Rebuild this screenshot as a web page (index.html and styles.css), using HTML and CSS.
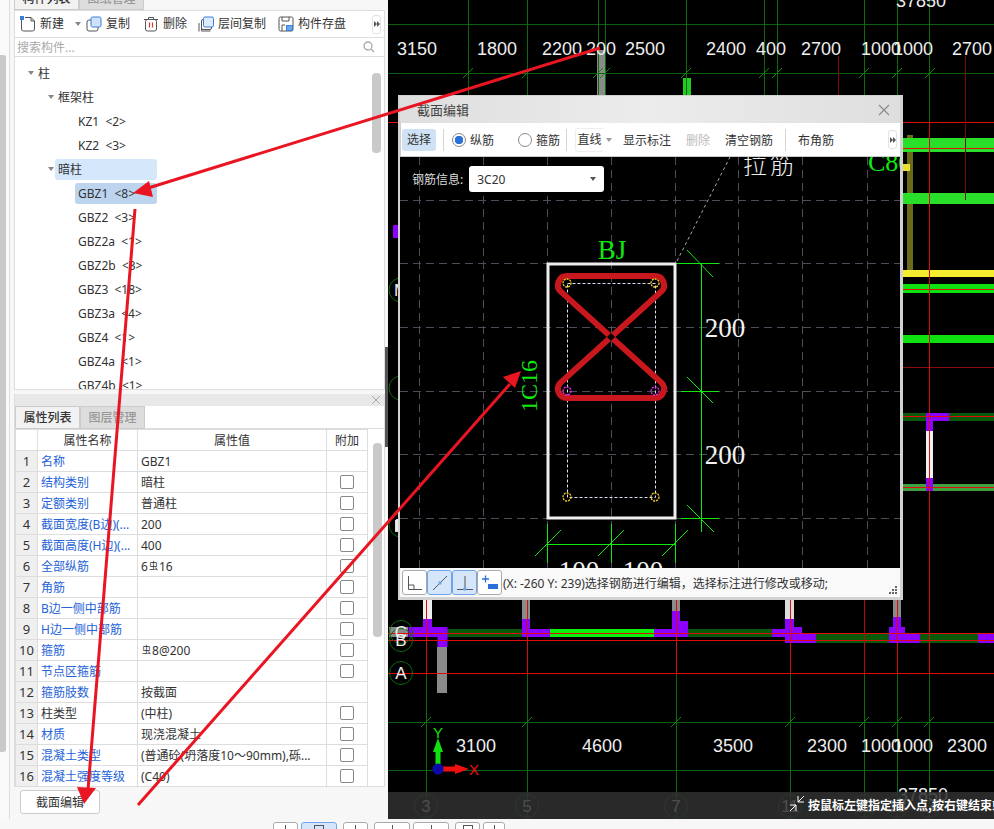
FILE: index.html
```html
<!DOCTYPE html>
<html lang="zh-CN">
<head>
    <meta charset="UTF-8">
    <title>截面编辑</title>
    <link rel="stylesheet" href="styles.css">
</head>
<body>
<div class="app">
    <div class="main">
        <div class="rail"><div class="rail-thumb"></div></div>

        <div class="left">
            <div class="panel-tabs cut">
                <div class="tab active">构件列表</div>
                <div class="tab">图纸管理</div>
            </div>
            <div class="toolbar">
                <div class="tb-item tb-new">
                    <svg width="16" height="16" viewBox="0 0 16 16"><path d="M1.500 3.500V13a2 2 0 0 0 2 2h9a2 2 0 0 0 2-2V5l-3.500-3.500H5" fill="none" stroke="#555"/><path d="M11 1.500V5h3.500" fill="none" stroke="#555"/><rect x="0" y="0" width="4" height="4" fill="#3a7fd8"/></svg>
                    <span>新建</span><i class="caret"></i>
                </div>
                <div class="tb-item tb-copy">
                    <svg width="16" height="16" viewBox="0 0 16 16"><rect x="1" y="4" width="11" height="11" rx="2" fill="#fff" stroke="#555"/><rect x="5" y="1" width="10" height="10" rx="1.500" fill="#cfe2fa" stroke="#3a7fd8"/></svg>
                    <span>复制</span>
                </div>
                <div class="tb-item tb-del">
                    <svg width="16" height="16" viewBox="0 0 16 16"><path d="M1 3.500h14M5.500 3.500V1.500h5v2" fill="none" stroke="#555"/><rect x="2.500" y="3.500" width="11" height="11.500" rx="2" fill="none" stroke="#555"/><path d="M6.500 6.500v5M9.500 6.500v5" stroke="#d33" stroke-width="1.200"/></svg>
                    <span>删除</span>
                </div>
                <div class="tb-item tb-floor">
                    <svg width="16" height="16" viewBox="0 0 16 16"><path d="M3.500 5v10h9M1 7v8.500" fill="none" stroke="#555"/><rect x="3.500" y="3.500" width="10" height="10" rx="1.500" fill="none" stroke="#555"/><rect x="5.500" y="1" width="10" height="10" rx="1.500" fill="#dfeafa" stroke="#3a7fd8"/></svg>
                    <span>层间复制</span>
                </div>
                <div class="tb-item tb-save">
                    <svg width="16" height="16" viewBox="0 0 16 16"><rect x="1" y="1" width="14" height="14" rx="1.500" fill="none" stroke="#555"/><path d="M4 1v4h7V1M4 15V9h3" fill="none" stroke="#555"/><rect x="8.500" y="9.500" width="6" height="5" fill="#6fa6e8" stroke="#3a7fd8"/></svg>
                    <span>构件存盘</span>
                </div>
                <div class="more-btn"><i></i><i></i></div>
            </div>
            <div class="search">
                <span>搜索构件...</span>
                <svg width="12" height="12" viewBox="0 0 12 12"><circle cx="5" cy="5" r="4" fill="none" stroke="#aaa" stroke-width="1.300"/><path d="M8 8l3 3" stroke="#aaa" stroke-width="1.300"/></svg>
            </div>
            <div class="tree">
                <div class="tree-scroll"></div>
                <div class="row lv0"><i class="caret"></i>柱</div>
                <div class="row lv1"><i class="caret"></i>框架柱</div>
                <div class="row lv2"><span>KZ1 &nbsp;&lt;2&gt;</span></div>
                <div class="row lv2"><span>KZ2 &nbsp;&lt;3&gt;</span></div>
                <div class="row lv1"><i class="caret"></i><span class="hl-group">暗柱</span></div>
                <div class="row lv2"><span class="hl-item">GBZ1 &nbsp;&lt;8&gt;</span></div>
                <div class="row lv2"><span>GBZ2 &nbsp;&lt;3&gt;</span></div>
                <div class="row lv2"><span>GBZ2a &nbsp;&lt;1&gt;</span></div>
                <div class="row lv2"><span>GBZ2b &nbsp;&lt;3&gt;</span></div>
                <div class="row lv2"><span>GBZ3 &nbsp;&lt;18&gt;</span></div>
                <div class="row lv2"><span>GBZ3a &nbsp;&lt;4&gt;</span></div>
                <div class="row lv2"><span>GBZ4 &nbsp;&lt;1&gt;</span></div>
                <div class="row lv2"><span>GBZ4a &nbsp;&lt;1&gt;</span></div>
                <div class="row lv2"><span>GBZ4b &nbsp;&lt;1&gt;</span></div>
            </div>

            <div class="props">
                <div class="props-bar"><svg width="10" height="10" viewBox="0 0 10 10"><path d="M1 1l8 8M9 1l-8 8" stroke="#aaa"/></svg></div>
                <div class="panel-tabs">
                    <div class="tab active">属性列表</div>
                    <div class="tab">图层管理</div>
                </div>
                <div class="props-body">
                    <table class="prop-table">
                        <tr class="head"><th class="c-no"></th><th class="c-name">属性名称</th><th class="c-val">属性值</th><th class="c-add">附加</th></tr>
                        <tr><td class="no">1</td><td class="name">名称</td><td>GBZ1</td><td></td></tr>
                        <tr><td class="no">2</td><td class="name">结构类别</td><td>暗柱</td><td><i class="check"></i></td></tr>
                        <tr><td class="no">3</td><td class="name">定额类别</td><td>普通柱</td><td><i class="check"></i></td></tr>
                        <tr><td class="no">4</td><td class="name">截面宽度(B边)(...</td><td>200</td><td><i class="check"></i></td></tr>
                        <tr><td class="no">5</td><td class="name">截面高度(H边)(...</td><td>400</td><td><i class="check"></i></td></tr>
                        <tr><td class="no">6</td><td class="name">全部纵筋</td><td>6<span class="bar-sign">虫</span>16</td><td><i class="check"></i></td></tr>
                        <tr><td class="no">7</td><td class="name">角筋</td><td></td><td><i class="check"></i></td></tr>
                        <tr><td class="no">8</td><td class="name">B边一侧中部筋</td><td></td><td><i class="check"></i></td></tr>
                        <tr><td class="no">9</td><td class="name">H边一侧中部筋</td><td></td><td><i class="check"></i></td></tr>
                        <tr><td class="no">10</td><td class="name">箍筋</td><td><span class="bar-sign">虫</span>8@200</td><td><i class="check"></i></td></tr>
                        <tr><td class="no">11</td><td class="name">节点区箍筋</td><td></td><td><i class="check"></i></td></tr>
                        <tr><td class="no">12</td><td class="name">箍筋肢数</td><td>按截面</td><td></td></tr>
                        <tr><td class="no">13</td><td>柱类型</td><td>(中柱)</td><td><i class="check"></i></td></tr>
                        <tr><td class="no">14</td><td class="name">材质</td><td>现浇混凝土</td><td><i class="check"></i></td></tr>
                        <tr><td class="no">15</td><td class="name">混凝土类型</td><td>(普通砼(坍落度10～90mm),砾...</td><td><i class="check"></i></td></tr>
                        <tr><td class="no">16</td><td class="name">混凝土强度等级</td><td>(C40)</td><td><i class="check"></i></td></tr>
                    </table>
                    <div class="props-scroll"></div>
                </div>
            </div>
            <div class="btn-row"><button class="btn">截面编辑</button></div>
        </div>

        <div class="splitter"><div class="splitter-grip"></div></div>

        <div class="cad">
            <svg class="cad-svg" width="606" height="819" viewBox="388 0 606 819">
                <rect x="388" y="0" width="606" height="819" fill="#000"/>

                <!-- bars on the right -->
                <rect x="907" y="135" width="6" height="135" fill="#6a6a18"/>
                <rect x="903" y="138" width="91" height="14" fill="#2adf2a"/>
                <rect x="903" y="164" width="7" height="7" fill="#e8e030"/>
                <rect x="903" y="193" width="91" height="11" fill="#2adf2a"/>
                <rect x="903" y="270" width="91" height="7" fill="#f5ee30"/>
                <rect x="903" y="284" width="91" height="9" fill="#0fe00f"/>
                <rect x="903" y="335" width="91" height="8" fill="#0fe00f"/>
                <rect x="903" y="413" width="91" height="8" fill="#0a5a0a"/>
                <rect x="903" y="484" width="91" height="7" fill="#3fa03f"/>
                <rect x="926" y="431" width="7" height="47" fill="#f2f2f2"/>
                <path d="M926 413h23v8h-16v10h-7zM926 478h7v13h-7z" fill="#8b00ff"/>

                <!-- columns top -->
                <rect x="597" y="50" width="9" height="45" fill="#8a8a8a"/>
                <rect x="683" y="78" width="8" height="17" fill="#22cc22"/>

                <!-- left strip bits -->
                <rect x="393" y="225" width="5" height="13" fill="#8b00ff"/>
                <rect x="395" y="520" width="3" height="12" fill="#ddd"/>

                <!-- beams bottom -->
                <g fill="#8a8a8a">
                    <rect x="437" y="647" width="10" height="46"/>
                    <rect x="522" y="600" width="8" height="19"/>
                    <rect x="672" y="600" width="8" height="11"/>
                    <rect x="893" y="600" width="8" height="17"/>
                </g>
                <rect x="423" y="600" width="9" height="19" fill="#eee"/>
                <rect x="785" y="600" width="9" height="19" fill="#ddd"/>
                <g fill="#0a5a0a">
                    <rect x="447" y="629" width="75" height="8"/>
                    <rect x="688" y="629" width="84" height="8"/>
                    <rect x="816" y="633" width="73" height="10"/>
                    <rect x="920" y="633" width="58" height="10"/>
                </g>
                <rect x="550" y="629" width="104" height="8" fill="#0cf00c"/>
                <g fill="#8b00ff">
                    <path d="M423 619h9v8h15.500v20h-10v-10h-29v-10h14.500z"/>
                    <path d="M522 619h8v10h20v8h-28z"/>
                    <path d="M672 611h8v10h8v16h-34v-8h18z"/>
                    <path d="M785 619h9v8h8v6h14v10h-31v-6h-13v-8h13z"/>
                    <path d="M893 617h8v10h4v6h15v10h-31v-16h4z"/>
                    <rect x="978" y="633" width="16" height="10"/>
                </g>
                <rect x="389" y="627" width="19" height="10" fill="#8a8a8a"/>

                <!-- grid -->
                <path d="M388 24.500H994M388 73.500H994M388 722.500H994M388 770.500H994" stroke="#0c5f0c" stroke-width="1"/>
                <path d="M468.500 0V96M527.500 0V96M598.500 0V96M605.500 0V96M686.500 0V96M764.500 0V96M777.500 0V96M864.500 0V96M897.500 0V96M929.500 0V122" stroke="#0c6a0c" stroke-width="1"/>
                <path d="M426.500 673V819M527.500 673V819M676.500 673V819M790.500 673V819M864.500 673V819M897.500 673V819M929.500 673V819" stroke="#0c6a0c" stroke-width="1"/>
                <path d="M463 78l10-10M522 78l10-10M593 78l10-10M600 78l10-10M681 78l10-10M759 78l10-10M772 78l10-10M859 78l10-10M892 78l10-10M925 78l10-10" stroke="#118a11"/>
                <path d="M421 727l10-10M522 727l10-10M671 727l10-10M785 727l10-10M859 727l10-10M892 727l10-10M924 727l10-10" stroke="#118a11"/>

                <!-- red axes -->
                <path d="M388 122.500H994M903 148.500H994M903 289.500H994M903 416.500H994M903 487.500H994M388 633.500H994M388 640.500H994M388 673.500H994" stroke="#e00c0c"/>
                <path d="M903 367.500H994" stroke="#8a0a0a"/>
                <path d="M929.500 122V673M426.500 600V673M527.500 600V673M676.500 600V673M790.500 600V673M897.500 600V673" stroke="#d80c0c"/>
                <path d="M864.500 600V673" stroke="#b00c0c"/>
                <path d="M838.500 56V96M965.500 56V200" stroke="#7a0a0a"/>

                <!-- axis bubbles -->
                <g class="bubble">
                    <circle cx="401" cy="290" r="12"/><circle cx="401" cy="388" r="12"/><circle cx="401" cy="525" r="12"/>
                    <circle cx="401" cy="632" r="11.500"/><circle cx="401" cy="640" r="11.500"/><circle cx="401" cy="673" r="11.500"/>
                    <circle cx="426" cy="806" r="11.500"/><circle cx="527" cy="806" r="11.500"/><circle cx="676" cy="806" r="11.500"/>
                    <circle cx="790" cy="806" r="11.500"/><circle cx="864" cy="806" r="11.500"/><circle cx="897" cy="806" r="11.500"/><circle cx="929" cy="806" r="11.500"/>
                </g>
                <g class="axis-name">
                    <text x="401" y="296">M</text><text x="401" y="531">D</text>
                    <text x="401" y="638">C</text><text x="401" y="646">B</text><text x="401" y="679">A</text>
                    <text x="426" y="812">3</text><text x="527" y="812">5</text><text x="676" y="812">7</text>
                    <text x="790" y="812">11</text><text x="864" y="812">12</text><text x="897" y="812">13</text><text x="929" y="812">14</text>
                </g>

                <!-- dimensions -->
                <g class="dim">
                    <text x="417" y="55">3150</text><text x="497" y="55">1800</text><text x="562" y="55">2200</text>
                    <text x="601" y="55">200</text><text x="645" y="55">2500</text><text x="726" y="55">2400</text>
                    <text x="771" y="55">400</text><text x="821" y="55">2700</text><text x="881" y="55">1000</text>
                    <text x="913" y="55">1000</text><text x="972" y="55">2700</text><text x="921" y="7">37850</text>
                    <text x="476" y="752">3100</text><text x="602" y="752">4600</text><text x="733" y="752">3500</text>
                    <text x="827" y="752">2300</text><text x="881" y="752">1000</text><text x="913" y="752">1000</text>
                    <text x="967" y="752">2300</text><text x="923" y="801">37850</text>
                </g>

                <!-- status bar -->
                <rect x="388" y="792" width="606" height="27" fill="#303030" fill-opacity="0.86"/>
                <path d="M798 803l6-6M798 797v6h6M796 806l-6 6M796 812v-6h-6" fill="none" stroke="#fff" transform="translate(0 -1)"/>
                <text class="hint" x="808" y="810">按鼠标左键指定插入点,按右键结束或</text>

                <!-- origin -->
                <path d="M438 769V749" stroke="#10e010" stroke-width="5"/>
                <path d="M438 738l5 14h-10z" fill="#10e010"/>
                <path d="M438 769h20" stroke="#f01010" stroke-width="5"/>
                <path d="M469 769l-14 5v-10z" fill="#f01010"/>
                <circle cx="438" cy="769" r="5.500" fill="#0a0aa8"/>
                <text class="axis-y" x="438" y="738">Y</text>
                <text class="axis-x" x="474" y="775">X</text>
            </svg>

            <div class="dialog">
                <div class="dlg-title">
                    <span>截面编辑</span>
                    <svg width="12" height="12" viewBox="0 0 12 12"><path d="M1 1l10 10M11 1L1 11" stroke="#888" stroke-width="1.100"/></svg>
                </div>
                <div class="dlg-tools">
                    <div class="sel-btn">选择</div>
                    <div class="sep sep-a"></div>
                    <i class="radio on"></i><span class="radio-label">纵筋</span>
                    <i class="radio radio-b"></i><span class="radio-label">箍筋</span>
                    <div class="sep sep-b"></div>
                    <div class="line-btn">直线</div><i class="caret"></i>
                    <span class="tool tool-first">显示标注</span>
                    <span class="tool off">删除</span>
                    <span class="tool">清空钢筋</span>
                    <div class="sep sep-c"></div>
                    <span class="tool-last">布角筋</span>
                    <div class="more-btn"><i></i><i></i></div>
                </div>
                <div class="dlg-canvas">
                    <svg width="500" height="411" viewBox="400 157 500 411">
                        <rect x="400" y="157" width="500" height="411" fill="#000"/>
                        <path d="M419.500 157V568M483.500 157V568M547.500 157V568M611.500 157V568M675.500 157V568M738.500 157V568M802.500 157V568M867.500 157V568M400 200.500H900M400 263.500H900M400 327.500H900M400 391.500H900M400 454.500H900M400 518.500H900" class="dash-grid"/>
                        <path d="M677 261L730 157" class="leader"/>
                        <rect x="548" y="264" width="127" height="254" fill="none" stroke="#eee" stroke-width="3"/>
                        <rect x="567.500" y="283.500" width="88" height="214" class="stirrup-dash"/>
                        <path d="M567 276H655A9 9 0 0 1 661.400 291.400L560.600 382.600A9 9 0 0 0 567 398H655A9 9 0 0 0 661.400 382.600L560.600 291.400A9 9 0 0 1 567 276Z" fill="none" stroke="#c8181e" stroke-width="6"/>
                        <path d="M611 333l4 4-4 4-4-4z" fill="#000"/>
                        <g class="bar-y">
                            <circle cx="567" cy="283" r="4"/><circle cx="655" cy="283" r="4"/>
                            <circle cx="567" cy="497" r="4"/><circle cx="655" cy="497" r="4"/>
                        </g>
                        <g class="bar-m">
                            <circle cx="567" cy="391" r="4"/><circle cx="655" cy="391" r="4"/>
                        </g>
                        <path d="M701.500 263V532M677 263.500H719M681 391.500H719M681 518.500H719M687 250l26 27M687 377l26 26M687 505l27 27M547.500 524V563M611.500 524V563M675.500 524V563M547 544.500H676M535 556l26-26M598 556l26-26M662 556l26-26" stroke="#10e810" fill="none"/>
                        <text class="cad-green" x="612" y="259">BJ</text>
                        <text class="cad-green c16" transform="translate(537 386) rotate(-90)">1C16</text>
                        <text class="cad-green c80" x="868" y="171">C80</text>
                        <text class="cad-white" x="725" y="337">200</text>
                        <text class="cad-white" x="725" y="464">200</text>
                        <text class="cad-white" x="579" y="580">100</text>
                        <text class="cad-white" x="643" y="580">100</text>
                        <text class="cad-cjk" x="770" y="174">拉筋</text>
                    </svg>
                    <div class="info-row">
                        <span>钢筋信息:</span>
                        <div class="info-select">3C20<i class="caret"></i></div>
                    </div>
                </div>
                <div class="dlg-status">
                    <div class="snap">
                        <svg width="20" height="20" viewBox="0 0 20 20"><path d="M3.500 3v13.500H17M3.500 12H9v4.500" fill="none" stroke="#555"/></svg>
                    </div>
                    <div class="snap on">
                        <svg width="20" height="20" viewBox="0 0 20 20"><path d="M3 17L17 3" stroke="#555"/><rect x="8.500" y="8.500" width="3" height="3" fill="#6fa6e8"/></svg>
                    </div>
                    <div class="snap on">
                        <svg width="20" height="20" viewBox="0 0 20 20"><path d="M10 3v13M2 16.500h16" fill="none" stroke="#555"/><circle cx="10" cy="16" r="1.800" fill="#6fa6e8"/></svg>
                    </div>
                    <div class="snap">
                        <svg width="20" height="20" viewBox="0 0 20 20"><path d="M2 6h7M5.500 2.500v7" stroke="#2a70d8" stroke-width="1.300"/><rect x="8" y="11" width="10" height="5" fill="#2a70d8"/></svg>
                    </div>
                    <span class="coord">(X: -260 Y: 239)选择钢筋进行编辑，选择标注进行修改或移动;</span>
                    <svg class="grip" width="10" height="10" viewBox="0 0 10 10"><path d="M7 1h2v2H7zM4 4h2v2H4zM7 4h2v2H7zM1 7h2v2H1zM4 7h2v2H4zM7 7h2v2H7z" fill="#666"/></svg>
                </div>
            </div>
        </div>
    </div>

    <div class="footer">
        <div class="foot-btn gap-s"><i class="tick"></i></div>
        <div class="foot-btn wide on"><i class="mark"></i></div>
        <div class="foot-btn"><i class="tick"></i></div>
        <div class="foot-btn wide gap-s"><i class="tick"></i></div>
        <div class="foot-btn wide"><i class="tick"></i></div>
        <div class="foot-btn gap-s"><i class="mark"></i></div>
        <div class="foot-btn narrow"><i class="tick"></i></div>
    </div>
</div>

<svg class="arrows" width="994" height="829" viewBox="0 0 994 829">
    <g fill="#ea1522" stroke="#ea1522" stroke-width="3">
        <path d="M600 48L145 189"/>
        <path d="M135 209L88 790"/>
        <path d="M138 805L510 384"/>
    </g>
    <g fill="#ea1522">
        <path d="M133 193L149 181L153 197Z"/>
        <path d="M84 804L77 787L96 788Z"/>
        <path d="M521 371L515 388L503 377Z"/>
    </g>
</svg>
</body>
</html>
```

FILE: styles.css
```css
* {
    margin: 0;
    padding: 0;
    box-sizing: border-box;
}

body {
    font-family: "Noto Sans", "Noto Sans CJK SC", sans-serif;
    font-size: 12px;
    color: #333;
    background: #f7f7f7;
    width: 994px;
    height: 829px;
    overflow: hidden;
    position: relative;
}

.app {
    height: 829px;
    display: flex;
    flex-direction: column;
}

.main {
    height: 819px;
    display: flex;
}

.rail {
    width: 10px;
    margin-right: 4px;
    padding-top: 55px;
    border-right: 1px solid #ddd;
    background: #fafafa;
}

.rail-thumb {
    width: 6px;
    height: 697px;
    background: #c9c9c9;
    border-radius: 0 3px 3px 0;
}

.left {
    width: 371px;
    display: flex;
    flex-direction: column;
}

.panel-tabs {
    display: flex;
    height: 23px;
    flex-shrink: 0;
    border-bottom: 1px solid #ddd;
}

.panel-tabs.cut {
    height: 11px;
    align-items: flex-end;
    overflow: hidden;
}

.tab {
    width: 65px;
    height: 23px;
    flex-shrink: 0;
    line-height: 22px;
    text-align: center;
    font-weight: 500;
    color: #999;
    background: #ddd;
    border: 1px solid #ccc;
}

.tab.active {
    color: #333;
    background: #f2f2f2;
}

.toolbar {
    height: 27px;
    flex-shrink: 0;
    display: flex;
    align-items: center;
    padding-left: 5px;
    background: #fff;
    border: 1px solid #ddd;
    border-top: none;
    position: relative;
}

.tb-item {
    display: flex;
    align-items: center;
    gap: 4px;
    line-height: 16px;
}

.tb-new { width: 66px; }
.tb-copy { width: 57px; }
.tb-del { width: 55px; }
.tb-floor { width: 80px; }

.tb-new .caret {
    margin-left: 7px;
}

.caret {
    display: inline-block;
    width: 0;
    height: 0;
    border-left: 3.5px solid transparent;
    border-right: 3.5px solid transparent;
    border-top: 4px solid #888;
    flex-shrink: 0;
}

.more-btn {
    margin-left: auto;
    width: 9px;
    height: 19px;
    margin-right: 3px;
    border: 1px solid #e2e2e2;
    border-radius: 3px;
    display: flex;
    align-items: center;
    justify-content: center;
}

.more-btn i {
    width: 0;
    height: 0;
    border-top: 3px solid transparent;
    border-bottom: 3px solid transparent;
    border-left: 3px solid #555;
}

.search {
    height: 19px;
    flex-shrink: 0;
    display: flex;
    align-items: center;
    justify-content: space-between;
    padding: 0 9px 0 2px;
    color: #aaa;
    background: #fff;
    border: 1px solid #ddd;
    border-top: none;
}

.tree {
    height: 333px;
    flex-shrink: 0;
    padding-top: 4px;
    background: #fff;
    border: 1px solid #ddd;
    border-top: none;
    position: relative;
    overflow: hidden;
}

.tree-scroll {
    position: absolute;
    left: 357px;
    top: 16px;
    width: 9px;
    height: 80px;
    border-radius: 4px;
    background: #c9c9c9;
}

.row {
    height: 24px;
    display: flex;
    align-items: center;
    white-space: nowrap;
}

.row .caret {
    margin-right: 4px;
}

.lv0 { padding-left: 13px; }
.lv1 { padding-left: 33px; }
.lv2 { padding-left: 63px; }

.hl-group,
.hl-item {
    height: 21px;
    line-height: 21px;
    border-radius: 3px;
}

.hl-group {
    width: 102px;
    margin-left: -3px;
    padding-left: 3px;
    background: #d5e7fb;
}

.hl-item {
    width: 82px;
    margin-left: -3px;
    padding-left: 3px;
    background: #bcd4ee;
}

.props {
    height: 393px;
    flex-shrink: 0;
    margin-top: 4px;
    display: flex;
    flex-direction: column;
    border: 1px solid #ddd;
    border-top: none;
    background: #fff;
}

.props-bar {
    height: 12px;
    flex-shrink: 0;
    display: flex;
    align-items: center;
    justify-content: flex-end;
    padding-right: 3px;
    background: #e8e8e8;
}

.props-body {
    flex: 1;
    display: flex;
    overflow: hidden;
}

.prop-table {
    width: 353px;
    height: 358px;
    border-collapse: collapse;
    table-layout: fixed;
}

.prop-table th,
.prop-table td {
    height: 21px;
    padding: 0 3px;
    border: 1px solid #ddd;
    font-weight: 400;
    white-space: nowrap;
    overflow: hidden;
}

.prop-table th {
    height: 21px;
    text-align: center;
}

.c-no { width: 22px; }
.c-name { width: 100px; }
.c-add { width: 41px; }

.prop-table td.no {
    text-align: center;
    padding: 0;
    background: #efefef;
    font-size: 13px;
}

.prop-table td.name {
    color: #2563d8;
}

.prop-table td:last-child {
    text-align: center;
    line-height: 0;
}

.check {
    display: inline-block;
    width: 14px;
    height: 14px;
    background: #fff;
    border: 1px solid #888;
    border-radius: 2px;
}

.bar-sign {
    font-size: 9px;
    vertical-align: 2px;
    margin: 0 1px;
}

.props-scroll {
    width: 9px;
    height: 194px;
    margin: 14px 0 0 5px;
    border-radius: 4px;
    background: #c9c9c9;
}

.btn-row {
    padding: 3px 0 0 6px;
}

.btn {
    width: 80px;
    height: 24px;
    font-family: inherit;
    font-size: 12px;
    color: #333;
    background: #fff;
    border: 1px solid #ccc;
    border-radius: 3px;
}

.splitter {
    width: 3px;
    background: #f7f7f7;
    padding-top: 347px;
}

.splitter-grip {
    height: 100px;
    background: #555;
}

.cad {
    width: 606px;
    height: 819px;
    position: relative;
    overflow: hidden;
}

.cad-svg {
    display: block;
}

.bubble circle {
    fill: none;
    stroke: #0c6a0c;
}

.axis-name text {
    font-family: "Liberation Sans", sans-serif;
    font-size: 17px;
    fill: #eee;
    text-anchor: middle;
}

.dim text {
    font-family: "Liberation Sans", sans-serif;
    font-size: 18px;
    fill: #eee;
    text-anchor: middle;
}

.hint {
    font-family: "Noto Sans CJK SC", sans-serif;
    font-size: 12px;
    font-weight: 700;
    fill: #fff;
}

.axis-y,
.axis-x {
    font-family: "Liberation Sans", sans-serif;
    font-size: 15px;
    text-anchor: middle;
}

.axis-y { fill: #10e010; }
.axis-x { fill: #f01010; }

.dialog {
    position: absolute;
    left: 10px;
    top: 95px;
    width: 505px;
    height: 505px;
    display: flex;
    flex-direction: column;
    background: #ccc;
    border: solid #d2d2d2;
    border-width: 1px 3px 3px 2px;
}

.dlg-title {
    height: 27px;
    flex-shrink: 0;
    display: flex;
    align-items: center;
    justify-content: space-between;
    padding: 0 10px 0 17px;
    font-size: 13px;
    color: #444;
    background: linear-gradient(90deg, #dedede, #ececec 50%, #dedede);
}

.dlg-tools {
    height: 33px;
    flex-shrink: 0;
    margin: 0 0 1px 1px;
    display: flex;
    align-items: center;
    background: #fff;
}

.sel-btn {
    width: 34px;
    height: 22px;
    margin-left: 1px;
    line-height: 22px;
    text-align: center;
    border-radius: 3px;
    background: #cfe2f5;
}

.sep {
    width: 1px;
    height: 22px;
    background: #d5d5d5;
    flex-shrink: 0;
}

.sep-a { margin: 0 8px 0 7px; }
.sep-b { margin: 0 8px 0 6px; }
.sep-c { margin: 0 12px 0 12px; }

.radio {
    width: 14px;
    height: 14px;
    margin-right: 4px;
    border: 1px solid #888;
    border-radius: 50%;
    background: #fff;
    flex-shrink: 0;
}

.radio.on {
    border-color: #888;
    background: radial-gradient(circle, #2a70d8 4px, #fff 4.5px);
}

.radio-b {
    margin-left: 24px;
}

.line-btn {
    width: 28px;
    height: 24px;
    line-height: 22px;
    text-align: center;
    font-size: 12px;
    border: 1px solid #eee;
    border-right: none;
    border-radius: 3px 0 0 3px;
}

.dlg-tools .caret {
    margin-left: 3px;
    border-top-color: #999;
}

.tool {
    margin-left: 15px;
}

.tool-first {
    margin-left: 11px;
}

.tool.off {
    color: #bbb;
}

.dlg-canvas {
    height: 411px;
    flex-shrink: 0;
    position: relative;
    overflow: hidden;
    background: #000;
}

.dlg-canvas svg {
    display: block;
}

.dash-grid {
    fill: none;
    stroke: #4a4e58;
    stroke-dasharray: 8 5;
}

.leader {
    fill: none;
    stroke: #aaa;
    stroke-dasharray: 3 3;
}

.stirrup-dash {
    fill: none;
    stroke: #d8e2f2;
    stroke-dasharray: 3 2;
}

.bar-y circle,
.bar-m circle {
    fill: none;
    stroke-width: 1.3;
    stroke-dasharray: 2 1;
}

.bar-y circle { stroke: #f8d020; }
.bar-m circle { stroke: #f028f0; }

.cad-green {
    font-family: "Liberation Serif", serif;
    font-size: 27px;
    fill: #10e810;
    text-anchor: middle;
}

.cad-green.c16 {
    font-size: 24px;
}

.cad-green.c80 {
    font-size: 26px;
    text-anchor: start;
}

.cad-white {
    font-family: "Liberation Serif", serif;
    font-size: 27px;
    fill: #f2f2f2;
    text-anchor: middle;
}

.cad-cjk {
    font-family: "Noto Sans CJK SC", sans-serif;
    font-size: 24px;
    font-weight: 300;
    letter-spacing: 3px;
    fill: #eee;
    text-anchor: middle;
}

.info-row {
    position: absolute;
    left: 12px;
    top: 9px;
    display: flex;
    align-items: center;
    gap: 6px;
    color: #ddd;
}

.info-select {
    width: 135px;
    height: 26px;
    padding: 0 8px;
    display: flex;
    align-items: center;
    justify-content: space-between;
    color: #333;
    background: #fff;
    border-radius: 3px;
}

.info-select .caret {
    border-top-color: #555;
}

.dlg-status {
    height: 29px;
    flex-shrink: 0;
    display: flex;
    align-items: center;
    padding-left: 2px;
    background: #f9f9f9;
    position: relative;
}

.snap {
    width: 25px;
    height: 25px;
    display: flex;
    align-items: center;
    justify-content: center;
    background: #fff;
    border: 1px solid #aaa;
    border-radius: 3px;
}

.snap.on {
    background: #d5e5fa;
    border-color: #6fa6e8;
}

.coord {
    margin-left: 1px;
    white-space: nowrap;
}

.grip {
    position: absolute;
    right: 2px;
    bottom: 2px;
}

.footer {
    height: 10px;
    display: flex;
    padding: 3px 0 0 273px;
    overflow: hidden;
    background: #f7f7f7;
}

.foot-btn {
    width: 25px;
    height: 20px;
    margin-right: 6px;
    padding-top: 2px;
    flex-shrink: 0;
    display: flex;
    justify-content: center;
    background: #fff;
    border: 1px solid #aaa;
    border-radius: 3px;
}

.foot-btn.wide {
    width: 36px;
}

.foot-btn.narrow {
    width: 22px;
}

.foot-btn.gap-s {
    margin-right: 3px;
}

.foot-btn.on {
    background: #d5e5fa;
    border-color: #6fa6e8;
}

.tick {
    width: 1px;
    height: 5px;
    background: #555;
}

.mark {
    width: 10px;
    height: 5px;
    border: 1px solid #555;
}

.arrows {
    position: absolute;
    left: 0;
    top: 0;
    pointer-events: none;
}
```
